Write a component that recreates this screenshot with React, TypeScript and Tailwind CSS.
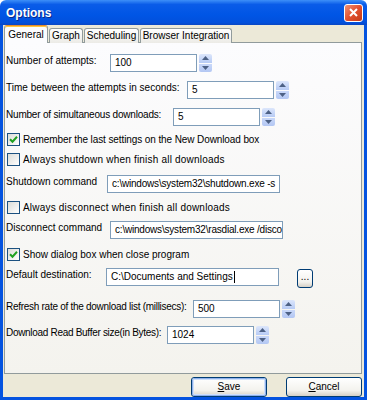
import React from 'react';

// Spinner (up/down) button in the XP style
function Spinner() {
    return (
        <div className="ml-[2px] flex h-[18px] w-[13px] flex-col gap-[1px]">
            <div className="flex flex-1 items-center justify-center rounded-t-[2px] bg-[linear-gradient(to_bottom,#dce6fb,#b7cbf5)]">
                <svg width="7" height="4" viewBox="0 0 7 4"><path d="M0 4 L3.5 0 L7 4 Z" fill="#4d6185" /></svg>
            </div>
            <div className="flex flex-1 items-center justify-center rounded-b-[2px] bg-[linear-gradient(to_bottom,#c9d8f9,#b3c7f3)]">
                <svg width="7" height="4" viewBox="0 0 7 4"><path d="M0 0 L7 0 L3.5 4 Z" fill="#4d6185" /></svg>
            </div>
        </div>
    );
}

function Field({ value, width, cursor, tight = '' }: { value: string; width: string; cursor?: boolean; tight?: string }) {
    return (
        <div className={`${width} ${tight} flex h-[18px] shrink-0 items-center overflow-hidden whitespace-nowrap border border-[#7f9db9] bg-white pl-[4px]`}>
            {value}
            {cursor && <span className="ml-[1px] inline-block h-[12px] w-px bg-black" />}
        </div>
    );
}

function NumRow({ label, labelW, value, top, tight = '' }: { label: string; labelW: string; value: string; top: string; tight?: string }) {
    return (
        <div className={`flex items-start ${top}`}>
            <div className={`${labelW} ${tight} shrink-0 whitespace-nowrap pt-[2px]`}>{label}</div>
            <Field value={value} width="w-[87px]" />
            <Spinner />
        </div>
    );
}

function Check({ checked, label, top, tight = '' }: { checked?: boolean; label: string; top: string; tight?: string }) {
    return (
        <div className={`flex h-[13px] items-center whitespace-nowrap ${top}`}>
            <div className="ml-[1px] flex h-[13px] w-[13px] items-center justify-center border border-[#1c5180] bg-[linear-gradient(135deg,#dcdcd7,#ffffff)]">
                {checked && (
                    <svg width="9" height="9" viewBox="0 0 9 9">
                        <path d="M1 4.2 L3.5 6.7 L8 1.8" stroke="#21a121" strokeWidth="2" fill="none" />
                    </svg>
                )}
            </div>
            <span className={`ml-[3px] ${tight}`}>{label}</span>
        </div>
    );
}

function XpButton({ children, isDefault, className = '' }: { children: React.ReactNode; isDefault?: boolean; className?: string }) {
    return (
        <div className={`rounded-[3px] border border-[#003c74] bg-[linear-gradient(to_bottom,#ffffff,#f3f2ed_70%,#d6d0c5)] ${className}`}>
            <div className={`flex h-full w-full items-center justify-center rounded-[2px] ${isDefault ? 'border border-[#8fb0ea] shadow-[inset_0_0_0_1px_#cee0fb]' : ''}`}>
                {children}
            </div>
        </div>
    );
}

export default function App() {
    const tab = 'flex h-[15px] items-center justify-center whitespace-nowrap rounded-t-[3px] border border-b-0 border-[#919b9c] bg-[linear-gradient(to_bottom,#ffffff,#ecebe6)]';

    return (
        <div className="flex h-[400px] w-[367px] flex-col overflow-hidden font-['Liberation_Sans',Arial,sans-serif] text-[10px] leading-none text-black">
            {/* Title bar */}
            <div className="flex h-[25px] shrink-0 items-center justify-between rounded-t-[6px] bg-[linear-gradient(to_bottom,#3d8ff8,#0a5ce8_18%,#0055e5_60%,#0250dc_90%,#0a47c2)] pl-[6px] pr-[4px]">
                <span className="text-[12px] font-bold text-white [text-shadow:1px_1px_0_#0a2a8a]">Options</span>
                <div className="flex h-[18px] w-[19px] items-center justify-center rounded-[3px] border border-white bg-[linear-gradient(135deg,#f09275,#e2502f_50%,#c33a17)]">
                    <svg width="9" height="9" viewBox="0 0 9 9">
                        <path d="M1 1 L8 8 M8 1 L1 8" stroke="white" strokeWidth="2" />
                    </svg>
                </div>
            </div>

            {/* Body */}
            <div className="flex flex-1 flex-col border-x-[3px] border-b-[3px] border-[#0453e0] bg-[#ece9d8] pl-[1px] pr-[2px]">
                {/* Tabs */}
                <div className="relative z-10 -mb-px flex h-[18px] shrink-0 items-end">
                    <div className="flex h-[18px] w-[44px] items-center justify-center rounded-t-[3px] border border-b-0 border-[#919b9c] border-t-[#e68b2c] bg-[#fcfcfe] shadow-[inset_0_1px_0_#ffc73c]">General</div>
                    <div className={`${tab} ml-[1px] w-[34px]`}>Graph</div>
                    <div className={`${tab} ml-[1px] w-[55px]`}>Scheduling</div>
                    <div className={`${tab} ml-[1px] w-[92px]`}>Browser Integration</div>
                </div>

                {/* Panel */}
                <div className="flex h-[332px] shrink-0 flex-col border border-[#919b9c] bg-[linear-gradient(to_bottom,#fcfcfe,#f4f3ee)] pl-[1px]">
                    <NumRow label="Number of attempts:" labelW="w-[104px]" value="100" top="mt-[11px]" />
                    <NumRow label="Time between the attempts in seconds:" labelW="w-[181px]" value="5" top="mt-[9px]" />
                    <NumRow label="Number of simultaneous downloads:" labelW="w-[167px]" value="5" top="mt-[9px]" tight="tracking-[-0.2px]" />

                    <Check checked label="Remember the last settings on the New Download box" top="mt-[7px]" tight="tracking-[-0.1px]" />
                    <Check label="Always shutdown when finish all downloads" top="mt-[7px]" tight="tracking-[0.2px]" />

                    <div className="mt-[9px] flex items-start">
                        <div className="w-[101px] shrink-0 whitespace-nowrap pt-[2px]">Shutdown command</div>
                        <Field value="c:\windows\system32\shutdown.exe -s" width="w-[173px]" tight="tracking-[-0.2px]" />
                    </div>

                    <Check label="Always disconnect when finish all downloads" top="mt-[8px]" tight="tracking-[0.2px]" />

                    <div className="mt-[7px] flex items-start">
                        <div className="w-[104px] shrink-0 whitespace-nowrap pt-[2px]">Disconnect command</div>
                        <Field value="c:\windows\system32\rasdial.exe /disco" width="w-[173px]" tight="tracking-[-0.2px]" />
                    </div>

                    <Check checked label="Show dialog box when close program" top="mt-[9px]" />

                    <div className="mt-[7px] flex items-start">
                        <div className="w-[100px] shrink-0 whitespace-nowrap pt-[2px]">Default destination:</div>
                        <Field value="C:\Documents and Settings" width="w-[173px]" cursor />
                        <XpButton className="ml-[18px] mt-[1px] h-[19px] w-[16px]">
                            <span className="-mt-[3px]">...</span>
                        </XpButton>
                    </div>

                    <NumRow label="Refresh rate of the download list (millisecs):" labelW="w-[187px]" value="500" top="mt-[12px]" tight="tracking-[-0.28px]" />
                    <NumRow label="Download Read Buffer size(in Bytes):" labelW="w-[161px]" value="1024" top="mt-[8px]" tight="tracking-[-0.3px]" />
                </div>

                {/* Buttons */}
                <div className="mt-[3px] flex justify-end gap-[19px]">
                    <XpButton isDefault className="h-[20px] w-[76px]">
                        <span><span className="underline">S</span>ave</span>
                    </XpButton>
                    <XpButton className="h-[20px] w-[76px]">
                        <span><span className="underline">C</span>ancel</span>
                    </XpButton>
                </div>
            </div>
        </div>
    );
}
